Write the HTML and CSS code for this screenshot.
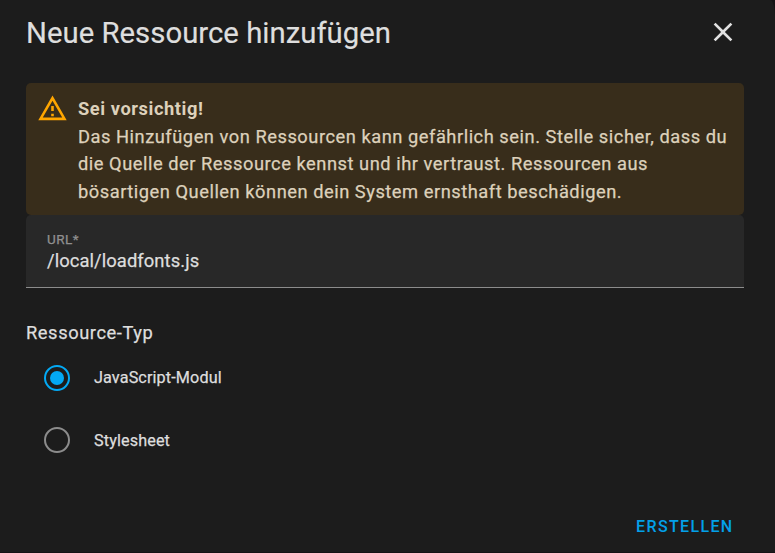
FILE: index.html
```html
<!DOCTYPE html>
<html lang="de">
<head>
<meta charset="utf-8">
<title>Neue Ressource hinzufügen</title>
<link rel="stylesheet" href="styles.css">
</head>
<body>
<main class="dialog">
  <header class="header">
    <h1 class="title">Neue Ressource hinzufügen</h1>
    <button class="close" aria-label="Schließen"><svg viewBox="0 0 24 24"><path d="M19,6.41L17.59,5L12,10.59L6.41,5L5,6.41L10.59,12L5,17.59L6.41,19L12,13.41L17.59,19L19,17.59L13.41,12L19,6.41Z"/></svg></button>
  </header>
  <section class="alert">
    <svg class="alert-icon" viewBox="0 0 24 24"><path d="M12,2L1,21H23M12,6L19.53,19H4.47M11,10V14H13V10M11,16V18H13V16"/></svg>
    <div class="alert-text">
      <strong class="alert-title">Sei vorsichtig!</strong>
      <div class="line">Das Hinzufügen von Ressourcen kann gefährlich sein. Stelle sicher, dass du</div>
      <div class="line">die Quelle der Ressource kennst und ihr vertraust. Ressourcen aus</div>
      <div class="line">bösartigen Quellen können dein System ernsthaft beschädigen.</div>
    </div>
  </section>
  <div class="field">
    <span class="field-label">URL*</span>
    <span class="field-value">/local/loadfonts.js</span>
  </div>
  <div class="group-label">Ressource-Typ</div>
  <div class="option"><span class="radio checked"></span><span class="option-label">JavaScript-Modul</span></div>
  <div class="option"><span class="radio"></span><span class="option-label">Stylesheet</span></div>
  <footer class="footer"><button class="create">ERSTELLEN</button></footer>
</main>
</body>
</html>
```
FILE: styles.css
```css
* { box-sizing: border-box; }
body { margin: 0; background: #151315; font-family: Roboto, "Liberation Sans", sans-serif; color: #dedede; }
button { background: none; border: 0; padding: 0; font: inherit; }
.dialog { width: 775px; height: 552px; padding: 0 31px 0 26px; background: #1c1c1c; border-radius: 0 5px 0 0 / 0 15px 0 0; overflow: hidden; display: flex; flex-direction: column; }
.header { height: 83px; flex: none; padding: 13px 5px 0 0; display: flex; justify-content: space-between; align-items: flex-start; }
.title { margin: 0; font-size: 29.3px; line-height: 40px; font-weight: 400; letter-spacing: .02px; white-space: nowrap; -webkit-text-stroke: .2px; }
.close { width: 32px; height: 38px; display: flex; align-items: center; }
.close svg { width: 32px; height: 32px; fill: #e1e1e1; }
.alert { height: 132px; flex: none; border-radius: 5px; background: #382d1b; color: #ddd1bb; padding: 12px 10px 0 11px; display: flex; gap: 10px; }
.alert-icon { width: 31px; height: 31px; margin-top: -2px; flex: none; fill: #ffa600; }
.alert-text { font-size: 18.3px; line-height: 27.7px; letter-spacing: .525px; white-space: nowrap; }
.alert-title { display: block; font-weight: 700; letter-spacing: .56px; }
.line, .field-label, .field-value, .group-label, .option-label { -webkit-text-stroke: .25px; }
.field { height: 73px; flex: none; padding: 16px 21px 0; background: #282828; border-bottom: 1px solid #8c8c8c; border-radius: 5px 5px 0 0; display: flex; flex-direction: column; }
.field-label { font-size: 13.5px; line-height: 16px; letter-spacing: .45px; color: #909090; }
.field-value { margin-top: 1px; font-size: 18.4px; line-height: 26px; letter-spacing: .07px; }
.group-label { height: 58px; padding-top: 33px; font-size: 18.3px; line-height: 24px; letter-spacing: .58px; flex: none; }
.option { height: 63px; padding-left: 18px; display: flex; align-items: center; gap: 24px; flex: none; }
.option + .option { height: 62px; }
.option + .option .option-label { padding-top: 1px; }
.radio { width: 26px; height: 26px; border: 2px solid #8c8c8c; border-radius: 50%; display: grid; place-items: center; }
.checked { border-color: #03a9f4; }
.checked::after { content: ""; width: 14px; height: 14px; border-radius: 50%; background: #03a9f4; }
.option-label { font-size: 16.2px; line-height: 20px; letter-spacing: .12px; }
.footer { padding: 44px 10.5px 0 0; display: flex; justify-content: flex-end; }
.create { color: #03a0e8; font-size: 16px; line-height: 24px; font-weight: 500; letter-spacing: 1.35px; }
```
